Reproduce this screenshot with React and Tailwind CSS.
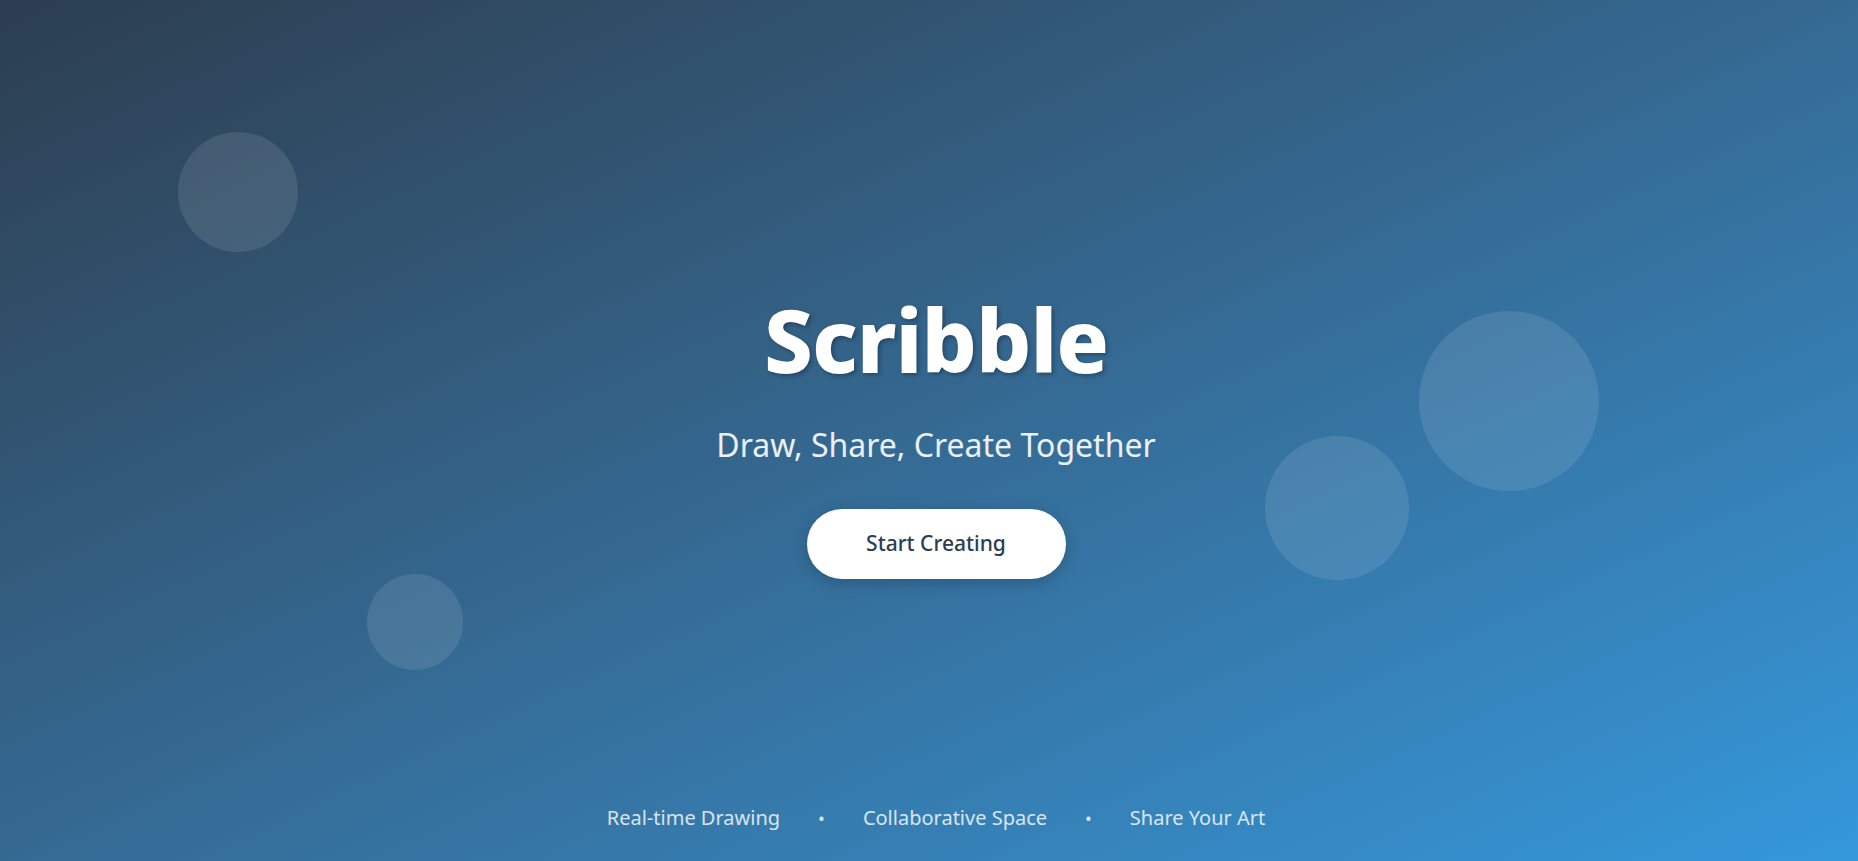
import React from 'react';

const bubbles = [
  'left-[178px] top-[132px] w-[120px] h-[120px]',
  'left-[367px] top-[574px] w-[96px] h-[96px]',
  'left-[1265px] top-[436px] w-[144px] h-[144px]',
  'left-[1419px] top-[311px] w-[180px] h-[180px]',
];

const features = ['Real-time Drawing', 'Collaborative Space', 'Share Your Art'];

const App = () => {
  return (
    <div className="relative w-full h-screen overflow-hidden bg-gradient-to-br from-[#2c3e50] to-[#3498db] font-['Noto_Sans',sans-serif]">
      {/* floating circles */}
      {bubbles.map((cls, i) => (
        <div key={i} className={`absolute rounded-full bg-white/10 ${cls}`} />
      ))}

      {/* Hero */}
      <div className="relative flex flex-col items-center justify-center h-full pt-[14px] pl-[14px]">
        <h1 className="text-[87px] leading-none font-extrabold text-white tracking-[-1px] [text-shadow:2px_2px_4px_rgba(0,0,0,0.3)]">
          Scribble
        </h1>
        <p className="mt-[46px] text-[32px] leading-none text-white/90">
          Draw, Share, Create Together
        </p>
        <button className="mt-[48px] w-[259px] h-[70px] rounded-full bg-white text-[#2c3e50] text-[21px] font-medium shadow-[0_4px_15px_rgba(0,0,0,0.2)]">
          Start Creating
        </button>
      </div>

      {/* Footer features */}
      <div className="absolute bottom-[28px] left-0 right-0 flex items-center justify-center gap-[38px] pl-[14px] text-[20px] text-white/80">
        {features.map((f, i) => (
          <React.Fragment key={f}>
            {i > 0 && <span className="text-[18px]">•</span>}
            <span>{f}</span>
          </React.Fragment>
        ))}
      </div>
    </div>
  );
};

export default App;
